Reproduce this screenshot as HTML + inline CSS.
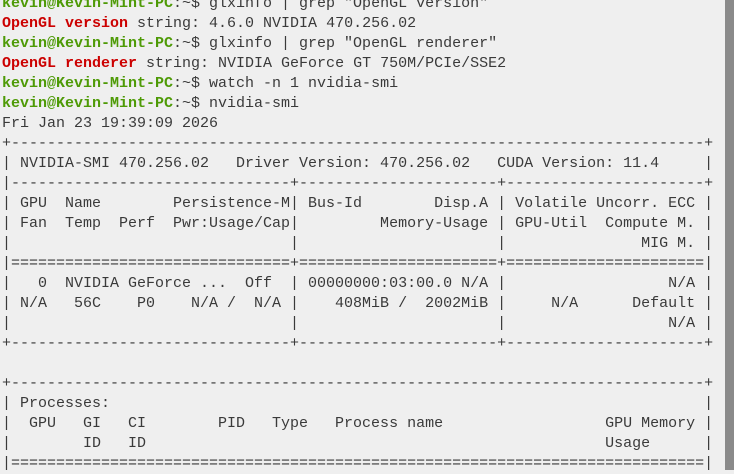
<!DOCTYPE html>
<html><head><meta charset="utf-8"><style>
html,body{margin:0;padding:0;width:734px;height:470px;overflow:hidden;background:#efefef;}
pre{margin:0;position:absolute;left:2px;top:-6px;font-family:"Liberation Mono",monospace;font-size:15px;line-height:20px;color:#3a3a3a;white-space:pre;}
.g{color:#4e9a06;font-weight:bold}
.r{color:#cc0000;font-weight:bold}
.b{color:#3465a4}
.sb{position:absolute;left:725px;top:0;width:9px;height:470px;background:#8a8a8a;}
</style></head><body>
<pre><span class="g">kevin@Kevin-Mint-PC</span>:~$ glxinfo | grep "OpenGL version"
<span class="r">OpenGL version</span> string: 4.6.0 NVIDIA 470.256.02
<span class="g">kevin@Kevin-Mint-PC</span>:~$ glxinfo | grep "OpenGL renderer"
<span class="r">OpenGL renderer</span> string: NVIDIA GeForce GT 750M/PCIe/SSE2
<span class="g">kevin@Kevin-Mint-PC</span>:~$ watch -n 1 nvidia-smi
<span class="g">kevin@Kevin-Mint-PC</span>:~$ nvidia-smi
Fri Jan 23 19:39:09 2026       
+-----------------------------------------------------------------------------+
| NVIDIA-SMI 470.256.02   Driver Version: 470.256.02   CUDA Version: 11.4     |
|-------------------------------+----------------------+----------------------+
| GPU  Name        Persistence-M| Bus-Id        Disp.A | Volatile Uncorr. ECC |
| Fan  Temp  Perf  Pwr:Usage/Cap|         Memory-Usage | GPU-Util  Compute M. |
|                               |                      |               MIG M. |
|===============================+======================+======================|
|   0  NVIDIA GeForce ...  Off  | 00000000:03:00.0 N/A |                  N/A |
| N/A   56C    P0    N/A /  N/A |    408MiB /  2002MiB |     N/A      Default |
|                               |                      |                  N/A |
+-------------------------------+----------------------+----------------------+
                                                                               
+-----------------------------------------------------------------------------+
| Processes:                                                                  |
|  GPU   GI   CI        PID   Type   Process name                  GPU Memory |
|        ID   ID                                                   Usage      |
|=============================================================================|
</pre>
<div class="sb"></div>
</body></html>
